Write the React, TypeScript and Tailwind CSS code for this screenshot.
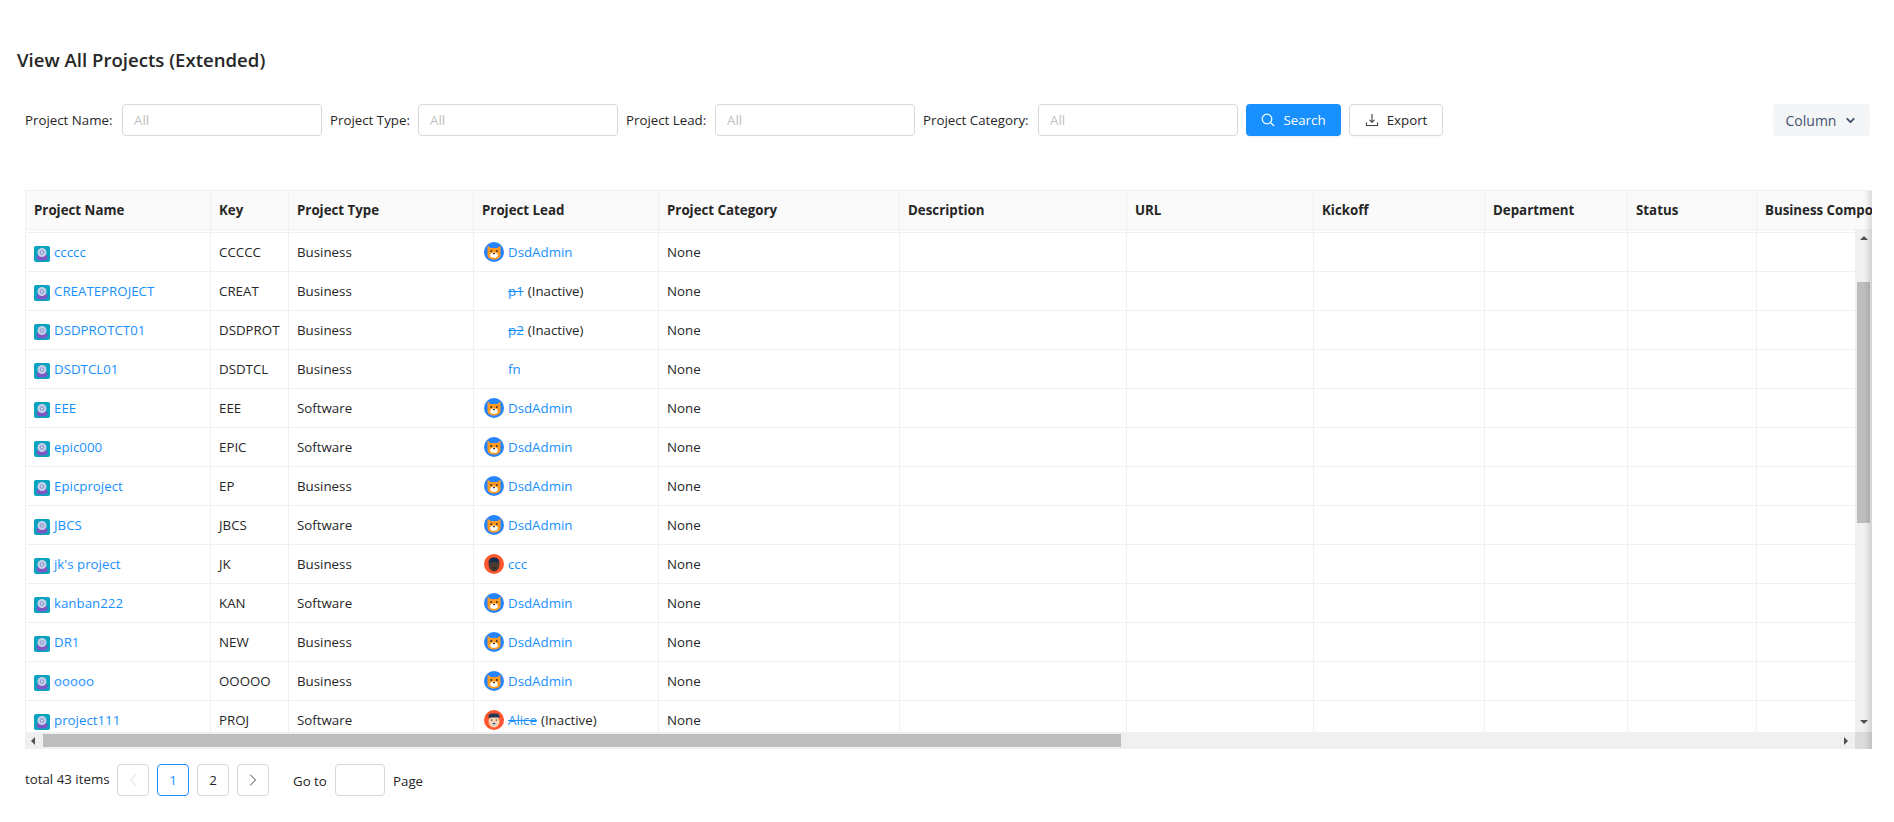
import { ChevronDown, ChevronLeft, ChevronRight } from 'lucide-react';

type Lead = 'cat' | 'dark' | 'alice' | null;

interface Row {
  name: string;
  key: string;
  type: string;
  lead: string;
  avatar: Lead;
  inactive?: boolean;
}

const rows: Row[] = [
  { name: 'ccccc', key: 'CCCCC', type: 'Business', lead: 'DsdAdmin', avatar: 'cat' },
  { name: 'CREATEPROJECT', key: 'CREAT', type: 'Business', lead: 'p1', avatar: null, inactive: true },
  { name: 'DSDPROTCT01', key: 'DSDPROT', type: 'Business', lead: 'p2', avatar: null, inactive: true },
  { name: 'DSDTCL01', key: 'DSDTCL', type: 'Business', lead: 'fn', avatar: null },
  { name: 'EEE', key: 'EEE', type: 'Software', lead: 'DsdAdmin', avatar: 'cat' },
  { name: 'epic000', key: 'EPIC', type: 'Software', lead: 'DsdAdmin', avatar: 'cat' },
  { name: 'Epicproject', key: 'EP', type: 'Business', lead: 'DsdAdmin', avatar: 'cat' },
  { name: 'JBCS', key: 'JBCS', type: 'Software', lead: 'DsdAdmin', avatar: 'cat' },
  { name: "jk's project", key: 'JK', type: 'Business', lead: 'ccc', avatar: 'dark' },
  { name: 'kanban222', key: 'KAN', type: 'Software', lead: 'DsdAdmin', avatar: 'cat' },
  { name: 'DR1', key: 'NEW', type: 'Business', lead: 'DsdAdmin', avatar: 'cat' },
  { name: 'ooooo', key: 'OOOOO', type: 'Business', lead: 'DsdAdmin', avatar: 'cat' },
  { name: 'project111', key: 'PROJ', type: 'Software', lead: 'Alice', avatar: 'alice', inactive: true },
];

const columns = [
  { title: 'Project Name', width: 185 },
  { title: 'Key', width: 78 },
  { title: 'Project Type', width: 185 },
  { title: 'Project Lead', width: 185 },
  { title: 'Project Category', width: 241 },
  { title: 'Description', width: 227 },
  { title: 'URL', width: 187 },
  { title: 'Kickoff', width: 171 },
  { title: 'Department', width: 143 },
  { title: 'Status', width: 129 },
  { title: 'Business Component', width: 300 },
];

const filters = [
  { label: 'Project Name', width: 'w-[89px]' },
  { label: 'Project Type', width: 'w-[80px]' },
  { label: 'Project Lead', width: 'w-[81px]' },
  { label: 'Project Category', width: 'w-[107px]' },
];

function ColGroup() {
  return (
    <colgroup>
      {columns.map(col => (
        <col key={col.title} style={{ width: col.width }} />
      ))}
    </colgroup>
  );
}

function ProjectIcon() {
  return (
    <svg width="16" height="16" viewBox="0 0 16 16" className="shrink-0 translate-y-0.5">
      <rect width="16" height="16" rx="2" fill="#07a3c0" />
      <path d="M2.500 11.500c0-1.500 1-2.500 2-3h7c1 .5 2 1.500 2 3 0 2-2 3-5.500 3s-5.500-1-5.500-3z" fill="#7e57c2" />
      <circle cx="8" cy="6.500" r="4.500" fill="#c5cfe8" />
      <circle cx="8" cy="6.500" r="2.200" fill="#8f9bd0" />
      <circle cx="8" cy="6.500" r="1" fill="#e6eaf6" />
    </svg>
  );
}

function Avatar({ kind }: { kind: Lead }) {
  if (kind === 'cat') {
    return (
      <svg width="20" height="20" viewBox="0 0 20 20" className="shrink-0">
        <circle cx="10" cy="10" r="10" fill="#2684ff" />
        <path d="M3.500 3.500l3 2.500h7l3-2.500v9.500c0 2.800-2.800 4.500-6.500 4.500s-6.500-1.700-6.500-4.500z" fill="#ff991f" />
        <circle cx="7.200" cy="9" r="1" fill="#42332a" />
        <circle cx="12.800" cy="9" r="1" fill="#42332a" />
        <ellipse cx="10" cy="13.200" rx="3.800" ry="2.600" fill="#fff" />
        <rect x="9" y="11" width="2" height="1.200" fill="#42332a" />
      </svg>
    );
  }
  if (kind === 'dark') {
    return (
      <svg width="20" height="20" viewBox="0 0 20 20" className="shrink-0">
        <circle cx="10" cy="10" r="10" fill="#ff5630" />
        <ellipse cx="10" cy="11" rx="5.500" ry="6.500" fill="#4f3a31" />
        <path d="M4.500 9c0-3.500 2-5.500 5.500-5.500s5.500 2 5.500 5.500c-3-1.200-8-1.200-11 0z" fill="#172b4d" />
        <rect x="6.500" y="9.500" width="2" height="1" fill="#172b4d" />
        <rect x="11.500" y="9.500" width="2" height="1" fill="#172b4d" />
        <rect x="8" y="13.500" width="4" height="1" fill="#2b1e18" />
      </svg>
    );
  }
  return (
    <svg width="20" height="20" viewBox="0 0 20 20" className="shrink-0">
      <circle cx="10" cy="10" r="10" fill="#ff5630" />
      <ellipse cx="10" cy="11.500" rx="5.500" ry="6" fill="#ffd2ad" />
      <path d="M4.500 8V6c0-1.500 1.500-2.500 3-2.500h5c1.500 0 3 1 3 2.500v1.500H9L8 7.500z" fill="#253858" />
      <rect x="7" y="9.500" width="1.200" height="1.200" fill="#253858" />
      <rect x="11.800" y="9.500" width="1.200" height="1.200" fill="#253858" />
      <ellipse cx="10" cy="14" rx="2.500" ry="1.800" fill="#c1c7d0" />
      <rect x="9" y="13" width="2" height="1" fill="#253858" />
    </svg>
  );
}

function Triangle({ dir }: { dir: 'up' | 'down' | 'left' | 'right' }) {
  const points = {
    up: '4,1 8,5 0,5',
    down: '0,1 8,1 4,5',
    left: '5,0 5,8 1,4',
    right: '1,0 1,8 5,4',
  }[dir];
  return (
    <svg width="8" height="8" viewBox="0 0 8 8" className="shrink-0">
      <polygon points={points} fill="#505050" />
    </svg>
  );
}

export default function App() {
  return (
    <div className="h-[822px] w-[1894px] overflow-hidden bg-white pl-[17px] pr-[22px] pt-[48px] font-['Open_Sans','Liberation_Sans',sans-serif] text-[13.3px] text-[#262626]">
      <h1 className="h-6 whitespace-nowrap text-[18.6px] font-semibold leading-6">View All Projects (Extended)</h1>

      <div className="ml-2 mt-8 flex h-8 items-center gap-2">
        {filters.map(filter => (
          <div key={filter.label} className="flex items-center gap-2">
            <span className={`${filter.width} translate-y-px whitespace-nowrap`}>{filter.label}:</span>
            <div className="flex h-8 w-[200px] items-center rounded-sm border border-[#d9d9d9] px-[11px] pt-px text-[#bfbfbf]">All</div>
          </div>
        ))}
        <button type="button" className="flex h-8 w-[95px] items-center justify-center gap-2 rounded-sm bg-[#1890ff] text-white shadow-[0_2px_0_rgba(0,0,0,0.04)]">
          <svg width="14" height="14" viewBox="0 0 14 14" fill="none" stroke="currentColor" strokeWidth="1.200">
            <circle cx="6" cy="6" r="4.800" />
            <path d="M9.500 9.500L13 13" />
          </svg>
          <span className="translate-y-px">Search</span>
        </button>
        <button type="button" className="flex h-8 w-[94px] items-center justify-center gap-2 rounded-sm border border-[#d9d9d9] bg-white shadow-[0_2px_0_rgba(0,0,0,0.015)]">
          <svg width="14" height="14" viewBox="0 0 14 14" fill="none" stroke="#404040" strokeWidth="1.100">
            <path d="M7 1v8M4.500 6.800L7 9.300l2.500-2.500M1.500 9.500v3h11v-3" />
          </svg>
          <span className="translate-y-px">Export</span>
        </button>
        <button type="button" className="ml-auto mr-[2px] flex h-8 w-[97px] items-center justify-center gap-2 rounded-[3px] bg-[#f4f5f7] text-[14px] text-[#42526e]">
          Column
          <ChevronDown size={13} strokeWidth={3.500} />
        </button>
      </div>

      <div className="relative ml-2 mt-[54px] w-[1847px] border-l border-t border-[#f0f0f0]">
        <div className="overflow-hidden">
          <table className="w-[2031px] table-fixed border-separate border-spacing-0">
            <ColGroup />
            <thead>
              <tr>
                {columns.map(col => (
                  <th key={col.title} className="h-[39px] whitespace-nowrap border-b border-r border-[#f0f0f0] bg-[#fafafa] px-2 pt-[2px] text-left font-bold">
                    {col.title}
                  </th>
                ))}
              </tr>
            </thead>
          </table>
        </div>

        <div className="flex h-[502px]">
          <div className="min-w-0 flex-1 overflow-hidden">
            <table className="w-[2031px] table-fixed border-separate border-spacing-0">
              <ColGroup />
              <tbody>
                <tr>
                  {columns.map(col => (
                    <td key={col.title} className="h-[3px] border-b border-r border-[#f0f0f0] p-0" />
                  ))}
                </tr>
                {rows.map(row => (
                  <tr key={row.name}>
                    <td className="h-[39px] border-b border-r border-[#f0f0f0] px-2">
                      <span className="flex items-center gap-1 text-[#1890ff]">
                        <ProjectIcon />
                        <span className="translate-y-px whitespace-nowrap">{row.name}</span>
                      </span>
                    </td>
                    <td className="border-b border-r border-[#f0f0f0] px-2 pt-[2px]">{row.key}</td>
                    <td className="border-b border-r border-[#f0f0f0] px-2 pt-[2px]">{row.type}</td>
                    <td className="border-b border-r border-[#f0f0f0] px-2">
                      <span className="ml-[2px] flex items-center gap-1">
                        {row.avatar ? <Avatar kind={row.avatar} /> : <span className="w-5" />}
                        <span className={`translate-y-px text-[#1890ff] ${row.inactive ? 'line-through' : ''}`}>{row.lead}</span>
                        {row.inactive && <span className="translate-y-px">(Inactive)</span>}
                      </span>
                    </td>
                    <td className="border-b border-r border-[#f0f0f0] px-2 pt-[2px]">None</td>
                    {columns.slice(5).map(col => (
                      <td key={col.title} className="border-b border-r border-[#f0f0f0]" />
                    ))}
                  </tr>
                ))}
              </tbody>
            </table>
          </div>
          <div className="flex w-[17px] flex-col items-center justify-between bg-[#f0f0f0] py-[5px]">
            <Triangle dir="up" />
            <Triangle dir="down" />
          </div>
        </div>

        <div className="flex h-[17px] bg-[#f0f0f0]">
          <div className="flex w-[1829px] items-center justify-between px-1">
            <Triangle dir="left" />
            <Triangle dir="right" />
          </div>
          <div className="w-[17px] bg-[#dcdcdc]" />
        </div>

        {/* scrollbar thumbs and the right-edge shadow sit on top of the tracks */}
        <div className="absolute left-[17px] top-[543px] h-[13px] w-[1078px] bg-[#bdbdbd]" />
        <div className="absolute right-[2px] top-[91px] h-[241px] w-[13px] bg-[#bdbdbd]" />
        <div className="pointer-events-none absolute bottom-0 right-0 top-0 w-2 bg-gradient-to-r from-transparent to-[rgba(0,0,0,0.12)]" />
      </div>

      <div className="ml-2 mt-[15px] flex h-8 items-center">
        <span className="mr-2 w-[84px] whitespace-nowrap">total 43 items</span>
        <button type="button" className="flex size-8 items-center justify-center rounded-sm border border-[#d9d9d9] text-[#d9d9d9]">
          <ChevronLeft size={20} strokeWidth={1.200} />
        </button>
        <button type="button" className="ml-2 size-8 rounded-sm border border-[#1890ff] pt-px text-[#1890ff]">1</button>
        <button type="button" className="ml-2 size-8 rounded-sm border border-[#d9d9d9] pt-px">2</button>
        <button type="button" className="ml-2 flex size-8 items-center justify-center rounded-sm border border-[#d9d9d9] text-[#404040]">
          <ChevronRight size={20} strokeWidth={1.200} />
        </button>
        <span className="ml-6 w-[34px] translate-y-0.5 whitespace-nowrap">Go to</span>
        <div className="ml-2 h-8 w-[50px] rounded-sm border border-[#d9d9d9]" />
        <span className="ml-2 translate-y-0.5">Page</span>
      </div>
    </div>
  );
}
